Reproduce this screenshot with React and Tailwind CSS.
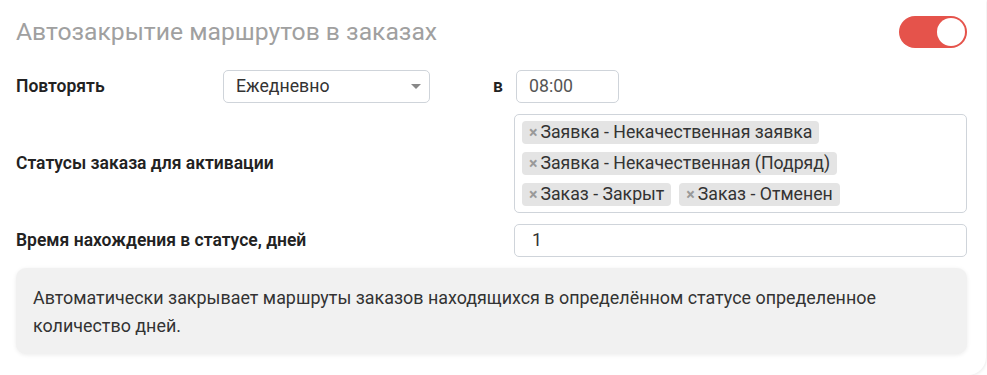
import { useState } from "react";

const TAGS = [
  ["Заявка - Некачественная заявка"],
  ["Заявка - Некачественная (Подряд)"],
  ["Заказ - Закрыт", "Заказ - Отменен"],
];

function Tag({ label }) {
  return (
    <span className="inline-flex items-center h-[23px] rounded-[4px] bg-[#e4e4e4] pl-[7px] pr-[7px] text-[17.7px] leading-[23px] text-[#333]">
      <span className="mr-[3px] text-[16px] font-bold text-[#999]">×</span>
      {label}
    </span>
  );
}

export default function App() {
  const [enabled, setEnabled] = useState(true);

  return (
    <div className="w-[987px] h-[375px] overflow-hidden bg-white font-['Roboto','Liberation_Sans',sans-serif]">
      <div className="w-[986px] h-[375px] rounded-br-[18px] shadow-[1px_1px_3px_rgba(0,0,0,0.07)] pl-4 pr-[19px] pt-4">
        <header className="flex items-center justify-between h-8">
          <h1 className="text-[24.7px] text-[#a0a0a0] leading-8">Автозакрытие маршрутов в заказах</h1>
          <button
            onClick={() => setEnabled((v) => !v)}
            className={`flex items-center w-[68px] h-8 rounded-full p-[2px] ${enabled ? "bg-[#e5534b] justify-end" : "bg-gray-300 justify-start"}`}
          >
            <span className="w-[28px] h-[28px] rounded-full bg-white" />
          </button>
        </header>

        <div className="flex items-center mt-[22px] h-[33px]">
          <label className="w-[207px] text-[17.5px] font-semibold text-[#222]">Повторять</label>
          <div className="flex items-center justify-between w-[207px] h-[33px] border border-[#cfd4da] rounded-[5px] pl-[12px] pr-[8px] text-[17.7px] text-[#333]">
            <span>Ежедневно</span>
            <svg width="10" height="5" viewBox="0 0 10 5"><path d="M0 0h10L5 5z" fill="#888" /></svg>
          </div>
          <span className="ml-[63px] w-[23px] text-[17.5px] font-semibold text-[#222]">в</span>
          <div className="flex items-center w-[103px] h-[33px] border border-[#cfd4da] rounded-[5px] pl-[12px] text-[17.7px] text-[#555]">08:00</div>
        </div>

        <div className="flex items-center mt-[11px]">
          <label className="w-[498px] text-[17.5px] font-semibold text-[#222]">Статусы заказа для активации</label>
          <div className="flex-1 h-[99px] border border-[#cfd4da] rounded-[5px] px-[7px] pt-[6px] flex flex-col gap-[8px]">
            {TAGS.map((row, i) => (
              <div key={i} className="flex gap-[8px]">
                {row.map((t) => <Tag key={t} label={t} />)}
              </div>
            ))}
          </div>
        </div>

        <div className="flex items-center mt-[11px]">
          <label className="w-[498px] text-[17.5px] font-semibold text-[#222]">Время нахождения в статусе, дней</label>
          <div className="flex-1 flex items-center h-[33px] border border-[#cfd4da] rounded-[5px] pl-[17px] text-[17.7px] text-[#333]">1</div>
        </div>

        <div className="mt-[11px] h-[86px] rounded-[10px] bg-[#f1f1f1] shadow-[0_1px_4px_rgba(0,0,0,0.08)] pl-[17px] pr-[60px] pt-[16px] text-[17.9px] leading-[28px] text-[#333]">
          Автоматически закрывает маршруты заказов находящихся в определённом статусе определенное количество дней.
        </div>
      </div>
    </div>
  );
}
